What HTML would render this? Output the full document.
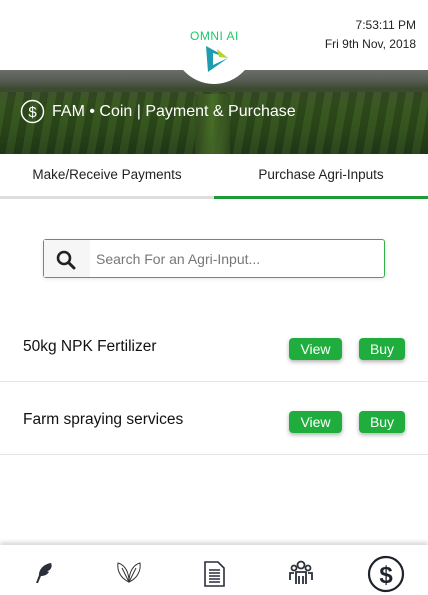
<!DOCTYPE html>
<html><head><meta charset="utf-8"><style>
*{box-sizing:border-box;margin:0;padding:0}
body{width:428px;height:595px;overflow:hidden;background:#fff;font-family:"Liberation Sans",sans-serif;position:relative;color:#222}
.time{position:absolute;right:12px;top:16px;font-size:12px;text-align:right;line-height:19px;color:#222}
.banner{position:absolute;top:70px;left:0;width:428px;height:84px;
background:linear-gradient(180deg,#6a6e66 0%,#585d55 12%,#3d4a30 22%,#34511f 40%,#2c4a1a 70%,#22391a 100%);overflow:hidden}
.banner .rows{position:absolute;left:0;right:0;top:22px;bottom:0;background:repeating-linear-gradient(100deg,rgba(90,130,50,.18) 0 8px,rgba(20,35,10,.18) 8px 16px)}
.banner .mid{position:absolute;left:195px;top:24px;width:35px;height:60px;background:linear-gradient(90deg,#33491f,#4a7229,#33491f);opacity:.8}
.logo{position:absolute;left:171px;top:-8px;width:86px;height:92px;border-radius:50%;background:#fff;z-index:2}
.omni{position:absolute;left:190px;top:29px;font-size:12px;color:#1cc86a;z-index:3;letter-spacing:0.5px}
.title{position:absolute;left:20px;top:99px;color:#fff;font-size:16px;z-index:3;display:flex;align-items:center}
.tabs{position:absolute;top:154px;left:0;width:428px;height:45px;font-size:13.5px}
.tab{position:absolute;top:0;width:214px;height:45px;text-align:center;line-height:42px}
.tab.a{left:0;border-bottom:3px solid #ddd}
.tab.b{left:214px;border-bottom:3px solid #1e9a36}
.search{position:absolute;left:43px;top:239px;width:342px;height:39px;border:1px solid #2fb44a;border-radius:3px;box-shadow:0 1px 4px rgba(0,0,0,.1)}
.search .ic{position:absolute;left:0;top:0;width:46px;height:37px;background:#f6f6f6}
.search span{position:absolute;left:52px;top:11px;font-size:14px;color:#777}
.row{position:absolute;left:0;width:428px;height:73px;border-bottom:1px solid #e4e4e4}
.row .n{position:absolute;left:23px;top:29px;font-size:15.5px;color:#111}
.btn{position:absolute;top:29px;height:22px;background:#1fae3e;color:#fff;font-size:14px;border-radius:4px;text-align:center;line-height:22px;box-shadow:0 2px 4px rgba(0,0,0,.3)}
.nav{position:absolute;left:0;top:545px;width:428px;height:50px;background:#fff;box-shadow:0 -3px 4px rgba(0,0,0,.15)}
.nav svg{position:absolute}
</style></head><body>
<div class="time">7:53:11 PM<br>Fri 9th Nov, 2018</div>
<div class="banner"><div class="rows"></div><div class="mid"></div></div>
<div class="logo"></div>
<div class="omni">OMNI AI</div>
<svg style="position:absolute;left:205px;top:45px;z-index:3" width="24" height="28" viewBox="0 0 24 28"><polygon points="1,1 23,13 3,27" fill="#1f9cb0"/><polygon points="8,8 23,13 8,20" fill="#fff"/><polygon points="12,4 23,13 14,12" fill="#b8d42a"/></svg>
<div class="title"><svg width="25" height="25" viewBox="0 0 25 25" style="margin-right:7px"><circle cx="12.5" cy="12.5" r="11" fill="none" stroke="#fff" stroke-width="1.5"/><text x="12.5" y="18" font-size="15" text-anchor="middle" fill="#fff" font-family="Liberation Sans">$</text></svg>FAM &#8226; Coin | Payment &amp; Purchase</div>
<div class="tabs"><div class="tab a">Make/Receive Payments</div><div class="tab b">Purchase Agri-Inputs</div></div>
<div class="search"><div class="ic"><svg style="position:absolute;left:12px;top:10px" width="20" height="20" viewBox="0 0 20 20"><circle cx="8" cy="8" r="6" fill="none" stroke="#222" stroke-width="2.6"/><line x1="12.5" y1="12.5" x2="18" y2="18" stroke="#222" stroke-width="3" stroke-linecap="round"/></svg></div><span>Search For an Agri-Input...</span></div>
<div class="row" style="top:309px"><div class="n">50kg NPK Fertilizer</div><div class="btn" style="left:289px;width:53px">View</div><div class="btn" style="left:359px;width:46px">Buy</div></div>
<div class="row" style="top:382px"><div class="n">Farm spraying services</div><div class="btn" style="left:289px;width:53px">View</div><div class="btn" style="left:359px;width:46px">Buy</div></div>
<div class="nav">
<svg style="left:34px;top:17px" width="20" height="22" viewBox="0 0 20 22"><path d="M2 21 L5 13 C5 7 10 2 17 1 C19 5 16 9 13 9 L15 10 C13 13 10 14 7 14 L4 21Z" fill="#2a2f3a"/></svg>
<svg style="left:116px;top:15px" width="26" height="24" viewBox="0 0 26 24" fill="none" stroke="#333" stroke-width="1"><path d="M13 22 C4 18 1 10 2 3 C9 5 13 12 13 22Z"/><path d="M13 22 C22 18 25 10 24 3 C17 5 13 12 13 22Z"/><path d="M13 22 L6 8 M13 22 L20 8"/></svg>
<svg style="left:204px;top:16px" width="21" height="26" viewBox="0 0 21 26"><path d="M1 1 H14 L20 7 V25 H1Z" fill="#fff" stroke="#2a2f3a" stroke-width="1.6"/><path d="M5 9h11M5 12h11M5 15h11M5 18h11M5 21h11" stroke="#2a2f3a" stroke-width="1.4"/></svg>
<svg style="left:289px;top:15px" width="24" height="25" viewBox="0 0 24 25" fill="none" stroke="#2a2f3a" stroke-width="1.8"><circle cx="12" cy="5" r="3.5"/><circle cx="5" cy="8" r="2.5"/><circle cx="19" cy="8" r="2.5"/><path d="M7 24V12h10v12M1 20v-7h4M23 20v-7h-4M10 24v-8M14 24v-8"/></svg>
<svg style="left:367px;top:10px" width="38" height="38" viewBox="0 0 38 38"><circle cx="19" cy="19" r="17" fill="none" stroke="#1d222b" stroke-width="2.2"/><text x="19" y="28" font-size="24" font-weight="bold" text-anchor="middle" fill="#1d222b" font-family="Liberation Sans">$</text></svg>
</div>
</body></html>
